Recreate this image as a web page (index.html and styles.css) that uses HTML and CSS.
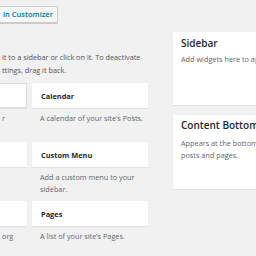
FILE: index.html
```html
<!DOCTYPE html>
<html>
<head>
<meta charset="utf-8">
<link rel="stylesheet" href="styles.css">
</head>
<body>
<div class="page">
  <div class="header">
    <a class="btn">in Customizer</a>
  </div>
  <div class="main">
    <div class="available">
      <p class="intro">it to a sidebar or click on it. To deactivate<br>ttings, drag it back.</p>
      <div class="grid">
        <div class="widget">
          <div class="wbox cut active"></div>
          <div class="wdesc cutdesc">r</div>
        </div>
        <div class="widget">
          <div class="wbox"><span class="wtitle">Calendar</span></div>
          <div class="wdesc">A calendar of your site’s Posts.</div>
        </div>
        <div class="widget">
          <div class="wbox cut"></div>
          <div class="wdesc cutdesc"></div>
        </div>
        <div class="widget">
          <div class="wbox"><span class="wtitle">Custom Menu</span></div>
          <div class="wdesc">Add a custom menu to your<br>sidebar.</div>
        </div>
        <div class="widget">
          <div class="wbox cut"></div>
          <div class="wdesc cutdesc">org</div>
        </div>
        <div class="widget">
          <div class="wbox"><span class="wtitle">Pages</span></div>
          <div class="wdesc">A list of your site’s Pages.</div>
        </div>
      </div>
    </div>
    <div class="sidebars">
      <div class="sbox sbox-1">
        <h2 class="stitle">Sidebar</h2>
        <p class="sdesc">Add widgets here to appear in your sidebar.</p>
      </div>
      <div class="sbox sbox-2">
        <h2 class="stitle">Content Bottom 1</h2>
        <p class="sdesc">Appears at the bottom of the content on<br>posts and pages.</p>
      </div>
    </div>
  </div>
</div>
</body>
</html>
```

FILE: styles.css
```css
html, body {
  margin: 0;
  padding: 0;
  background: #f1f1f1;
  overflow: hidden;
}
body {
  width: 256px;
  height: 256px;
  font-family: "Open Sans", "Noto Sans", sans-serif;
  color: #555d66;
}
.page {
  width: 400px;
}
.header {
  height: 17px;
}
.btn {
  display: inline-block;
  box-sizing: border-box;
  height: 17px;
  margin-left: -6px;
  padding: 0 4px 0 8px;
  background: #f7f7f7;
  border: 1px solid #cccccc;
  border-radius: 2px;
  box-shadow: 0 1px 0 #cccccc;
  color: #0073aa;
  font-size: 7.5px;
  font-weight: 600;
  line-height: 15px;
  white-space: nowrap;
}
.main {
  display: flex;
  align-items: flex-start;
  margin-top: 15px;
}
.available {
  width: 148px;
  flex: none;
}
.intro {
  margin: 19px 0 0 2px;
  font-size: 7.3px;
  line-height: 13px;
  color: #50555b;
  white-space: nowrap;
}
.grid {
  display: grid;
  grid-template-columns: 27px 116px;
  column-gap: 5px;
  margin-top: 6px;
}
.widget {
  margin-bottom: 6px;
}
.wbox {
  box-sizing: border-box;
  height: 25px;
  background: #fff;
  box-shadow: 0 1px 1px rgba(0, 0, 0, 0.06);
  padding: 0 9px;
  display: flex;
  align-items: center;
}
.wbox.active {
  border: 1px solid #dddddd;
  border-left: none;
}
.wtitle {
  font-size: 7.4px;
  font-weight: 700;
  color: #23282d;
  white-space: nowrap;
}
.wdesc {
  margin: 4px 0 0 8px;
  font-size: 7.3px;
  line-height: 12px;
  min-height: 24px;
  color: #62676c;
  white-space: nowrap;
}
.cutdesc {
  margin-left: 2px;
}
.sidebars {
  margin-left: 25px;
  width: 140px;
  flex: none;
}
.sbox {
  background: #fff;
  box-shadow: 0 1px 1px rgba(0, 0, 0, 0.06);
  padding: 3px 8px 0;
  box-sizing: border-box;
  white-space: nowrap;
  overflow: hidden;
}
.sbox-1 {
  height: 73px;
  margin-bottom: 10px;
}
.sbox-2 {
  height: 74px;
  padding-top: 2px;
}
.stitle {
  margin: 0;
  font-size: 10px;
  font-weight: 600;
  line-height: 16px;
  color: #23282d;
}
.sdesc {
  margin: 3px 0 0;
  font-size: 7.3px;
  line-height: 11.5px;
  color: #62676c;
}
.sbox-2 .sdesc {
  margin-top: 5px;
}
```
